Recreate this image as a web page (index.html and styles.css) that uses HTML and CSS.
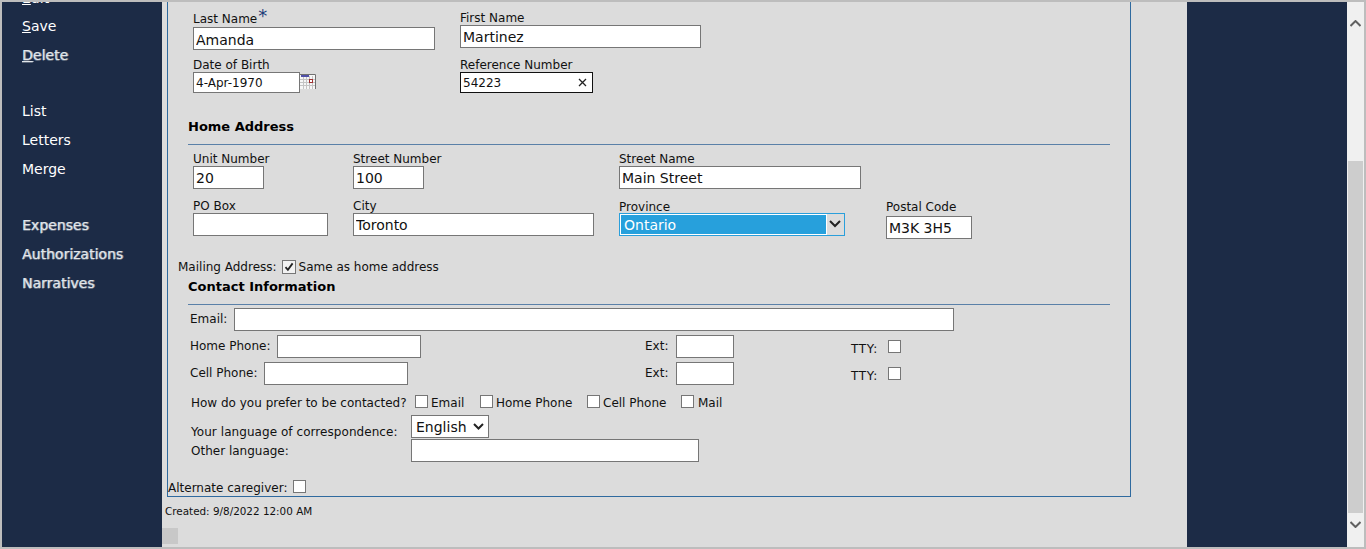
FILE: index.html
```html
<!DOCTYPE html>
<html lang="en">
<head>
<meta charset="utf-8">
<title>Client record</title>
<link rel="stylesheet" href="styles.css">
</head>
<body>
<div class="frame">
  <nav class="sidebar">
    <a class="nav-item nav-first"><u>E</u>dit</a>
    <a class="nav-item"><u>S</u>ave</a>
    <a class="nav-item soft"><u>D</u>elete</a>
    <div class="nav-gap"></div>
    <a class="nav-item">List</a>
    <a class="nav-item">Letters</a>
    <a class="nav-item">Merge</a>
    <div class="nav-gap"></div>
    <a class="nav-item soft">Expenses</a>
    <a class="nav-item soft">Authorizations</a>
    <a class="nav-item soft">Narratives</a>
  </nav>
  <main class="content">
    <form class="panel">
      <div class="row row-name">
        <div class="field w267 drop1">
          <label class="lbl lbl-req">Last Name<span class="req">*</span></label>
          <input class="inp big low w242" value="Amanda">
        </div>
        <div class="field">
          <label class="lbl">First Name</label>
          <input class="inp big w241" value="Martinez">
        </div>
      </div>
      <div class="row row-birth">
        <div class="field w267">
          <label class="lbl">Date of Birth</label>
          <div class="inline">
            <input class="inp small w107" value="4-Apr-1970">
            <svg class="cal" width="16" height="15" viewBox="0 0 16 15">
              <rect x="0" y="0" width="16" height="15" fill="#f6f6f6"/>
              <path d="M0 5.5h15M0 8.5h15M0 11.5h15M3.5 2v13M6.5 2v13M9.5 2v13M12.5 2v13" stroke="#c4c4c4" fill="none"/>
              <path d="M0 0.5h15.5V15" stroke="#707070" fill="none"/>
              <rect x="1" y="1" width="8" height="2" fill="#5050a8"/>
              <rect x="9.5" y="5.5" width="3" height="3" fill="#fff" stroke="#a03030"/>
            </svg>
          </div>
        </div>
        <div class="field">
          <label class="lbl">Reference Number</label>
          <div class="refbox">
            <input class="ref-input" value="54223">
            <svg class="ref-x" width="9" height="9" viewBox="0 0 9 9"><path d="M1 1l7 7M8 1l-7 7" stroke="#222" stroke-width="1.3" fill="none"/></svg>
          </div>
        </div>
      </div>
      <h3 class="head head-home">Home Address</h3>
      <hr class="rule rule-home">
      <div class="row row-unit">
        <div class="field w160"><label class="lbl">Unit Number</label><input class="inp big w71" value="20"></div>
        <div class="field w266"><label class="lbl">Street Number</label><input class="inp big w71" value="100"></div>
        <div class="field"><label class="lbl">Street Name</label><input class="inp big w242" value="Main Street"></div>
      </div>
      <div class="row row-city">
        <div class="field w160"><label class="lbl">PO Box</label><input class="inp big w135"></div>
        <div class="field w266"><label class="lbl">City</label><input class="inp big w241" value="Toronto"></div>
        <div class="field w267">
          <label class="lbl lbl-prov">Province</label>
          <div class="selectbox">
            <span class="select-value">Ontario</span>
            <svg class="chev" width="12" height="8" viewBox="0 0 12 8"><path d="M1 1l5 5 5-5" stroke="#222" stroke-width="2" fill="none"/></svg>
          </div>
        </div>
        <div class="field"><label class="lbl lbl-postal">Postal Code</label><input class="inp big w86" value="M3K 3H5"></div>
      </div>
      <div class="mailing">
        <span class="lbl-text">Mailing Address:</span>
        <span class="check checked"><svg width="10" height="10" viewBox="0 0 10 10"><path d="M1.5 5.2l2.4 2.6L8.6 1.4" stroke="#222" stroke-width="1.8" fill="none"/></svg></span>
        <span class="lbl-text">Same as home address</span>
      </div>
      <h3 class="head head-contact">Contact Information</h3>
      <hr class="rule rule-contact">
      <div class="line line-email">
        <span class="lbl-text">Email:</span>
        <input class="inp big w720 ml7">
      </div>
      <div class="line line-phone">
        <span class="lbl-text phone-home">Home Phone:</span>
        <input class="inp big w144">
        <span class="lbl-text ext-home">Ext:</span>
        <input class="inp big w58">
        <span class="lbl-text tty">TTY:</span>
        <span class="check tty-box"></span>
      </div>
      <div class="line line-phone line-cell">
        <span class="lbl-text phone-cell">Cell Phone:</span>
        <input class="inp big w144">
        <span class="lbl-text ext-cell">Ext:</span>
        <input class="inp big w58">
        <span class="lbl-text tty">TTY:</span>
        <span class="check tty-box"></span>
      </div>
      <div class="prefer">
        <span class="lbl-text prefer-q">How do you prefer to be contacted?</span>
        <span class="check"></span><span class="lbl-text opt1">Email</span>
        <span class="check"></span><span class="lbl-text opt2">Home Phone</span>
        <span class="check"></span><span class="lbl-text opt3">Cell Phone</span>
        <span class="check"></span><span class="lbl-text opt4">Mail</span>
      </div>
      <div class="lang">
        <span class="lbl-text lang-q">Your language of correspondence:</span>
        <div class="langbox">
          <span>English</span>
          <svg width="11" height="7" viewBox="0 0 11 7"><path d="M1 1l4.5 4.5L10 1" stroke="#222" stroke-width="2" fill="none"/></svg>
        </div>
      </div>
      <div class="other">
        <span class="lbl-text other-q">Other language:</span>
        <input class="inp big w288">
      </div>
      <div class="alternate">
        <span class="lbl-text alternate-q">Alternate caregiver:</span>
        <span class="check"></span>
      </div>
    </form>
    <p class="created">Created: 9/8/2022 12:00 AM</p>
    <div class="corner"></div>
  </main>
  <aside class="right-band"></aside>
  <div class="scrollbar">
    <svg class="arrow-up" width="11" height="7" viewBox="0 0 11 7"><path d="M0.5 6L5.5 1l5 5" stroke="#606060" stroke-width="2" fill="none"/></svg>
    <div class="thumb"></div>
    <svg class="arrow-down" width="11" height="7" viewBox="0 0 11 7"><path d="M0.5 1l5 5 5-5" stroke="#606060" stroke-width="2" fill="none"/></svg>
  </div>
</div>
</body>
</html>
```

FILE: styles.css
```css
* { box-sizing: border-box; }
html, body { margin: 0; padding: 0; height: 549px; overflow: hidden; }
body { font-family: "DejaVu Sans", Verdana, sans-serif; font-size: 12px; color: #111; }

.frame {
  width: 1366px; height: 549px;
  border: 2px solid #bdbdbd;
  display: flex;
  background: #dcdcdc;
  overflow: hidden;
}

.sidebar {
  width: 160px; flex: none;
  background: #1c2b46;
  padding: 0 0 0 20px;
  overflow: hidden;
  font-size: 14px;
  color: #fff;
}
.nav-item { display: block; height: 29px; line-height: 29px; color: #fff; }
.nav-first { margin-top: -18px; height: 28px; }
.nav-item.soft { color: #e2e6eb; text-shadow: 1px 0 0 #8d96a4, 0 1px 0 #5f6a7c; }
.nav-gap { height: 27px; }

.content { width: 1025px; flex: none; background: #dcdcdc; overflow: hidden; }

.panel {
  margin-left: 5px;
  width: 964px; height: 495px;
  border: 1px solid #2f6a9f;
  border-top: 0;
  padding-top: 8px;
}

.row { display: flex; align-items: flex-start; margin-left: 25px; }
.row-name { height: 47px; }
.row-birth { height: 61px; }
.row-unit { height: 47px; }
.row-city { height: 63px; }

.field { display: flex; flex-direction: column; align-items: flex-start; }
.drop1 { margin-top: 1px; }
.lbl { display: block; height: 15px; line-height: 17px; white-space: nowrap; }
.lbl-req { height: 16px; line-height: 13px; }
.lbl-prov { line-height: 19px; }
.lbl-postal { height: 18px; line-height: 19px; }
.req { font-size: 18px; line-height: 10px; color: #1c3c78; margin-left: 1px; vertical-align: 1px; }
.inline { display: flex; align-items: flex-start; }
.cal { margin-top: 2px; }

.w267 { width: 267px; }
.w266 { width: 266px; }
.w160 { width: 160px; }

.inp {
  display: block;
  height: 23px;
  border: 1px solid #767676;
  border-radius: 0;
  background: #fff;
  padding: 0 2px;
  margin: 0;
  font-family: inherit;
  color: #111;
  outline: none;
}
.inp.big { font-size: 14px; }
.inp.low { padding-top: 2px; }
.inp.small { font-size: 12px; height: 21px; }
.w242 { width: 242px; }
.w241 { width: 241px; }
.w107 { width: 107px; }
.w71 { width: 71px; }
.w135 { width: 135px; }
.w86 { width: 86px; }
.w720 { width: 720px; }
.w144 { width: 144px; }
.w58 { width: 58px; }
.w288 { width: 288px; }
.ml7 { margin-left: 7px; }

.refbox {
  width: 133px; height: 21px;
  border: 1px solid #111;
  background: #fff;
  display: flex; align-items: center;
  padding-right: 5px;
}
.ref-input {
  flex: 1; min-width: 0; border: 0; padding: 0 2px; height: 19px;
  font: 12px "DejaVu Sans", Verdana, sans-serif; color: #111; outline: none; background: transparent;
}

.head { margin: 0; font-size: 13px; font-weight: bold; height: 16px; line-height: 18px; margin-left: 20px; color: #000; }
.rule { border: 0; height: 1px; background: #5a80a8; margin: 0 0 0 20px; width: 922px; }
.rule-home { margin-top: 10px; margin-bottom: 6px; }

.selectbox {
  width: 226px; height: 23px;
  border: 1px solid #2a9fdb;
  background: #dcdcdc;
  display: flex; align-items: center;
}
.select-value {
  width: 207px; height: 21px;
  background: #27a0dc;
  border: 1px solid #fff;
  color: #fff;
  font-size: 14px; line-height: 20px;
  padding-left: 3px;
  margin-right: 2px;
}
.chev { flex: none; margin-top: -1px; }

.lbl-text { white-space: nowrap; line-height: 15px; }

.check {
  display: inline-flex; align-items: center; justify-content: center;
  width: 13px; height: 13px; flex: none;
  border: 1px solid #767676;
  border-radius: 0;
  background: #fff;
}
.check.checked { width: 14px; height: 14px; background: #f2f2f2; }

.mailing { display: flex; align-items: center; margin-left: 10px; height: 15px; margin-top: -1px; gap: 3px; }
.mailing .check { margin: -2px -1px 0 2px; }
.mailing .lbl-text:last-child { margin-left: 1px; }

.head-contact { margin-top: 3px; }
.rule-contact { margin-top: 10px; margin-bottom: 3px; }

.line { display: flex; align-items: center; height: 23px; }
.line-email { margin-left: 22px; margin-bottom: 4px; }
.line-phone { margin-bottom: 4px; }
.phone-home { margin-left: 22px; margin-right: 6px; width: 81px; }
.phone-cell { margin-left: 22px; margin-right: 6px; width: 68px; }
.ext-home { margin-left: 224px; width: 31px; }
.ext-cell { margin-left: 237px; width: 31px; }
.tty { margin-left: 117px; width: 37px; margin-top: 5px; letter-spacing: 0.7px; }
.tty-box { margin-top: -1px; }

.prefer { display: flex; align-items: center; margin-left: 23px; height: 14px; margin-top: 9px; }
.prefer-q { width: 224px; margin-top: 5px; }
.opt1 { margin-left: 3px; width: 49px; margin-top: 5px; }
.opt2 { margin-left: 3px; width: 91px; margin-top: 5px; }
.opt3 { margin-left: 3px; width: 78px; margin-top: 5px; }
.opt4 { margin-left: 4px; margin-top: 5px; }

.lang { display: flex; align-items: flex-start; margin-top: 7px; margin-left: 23px; height: 23px; }
.lang-q { width: 220px; margin-top: 10px; letter-spacing: 0.06px; }
.langbox {
  width: 78px; height: 23px; border: 1px solid #767676; background: #fff;
  font-size: 14px; display: flex; align-items: center; justify-content: space-between;
  padding: 0 4px 0 4px;
}

.other { display: flex; align-items: flex-start; margin-left: 23px; margin-top: 1px; height: 23px; }
.other-q { width: 220px; margin-top: 5px; }

.alternate { display: flex; align-items: center; margin-top: 17px; height: 14px; gap: 6px; }
.alternate-q { margin-top: 4px; }

.created { margin: 8px 0 0 3px; font-size: 10.4px; line-height: 12px; color: #111; }
.corner { width: 16px; height: 16px; background: #c8c8c8; margin-top: 11px; }

.right-band { width: 160px; flex: none; background: #1c2b46; }

.scrollbar {
  width: 17px; flex: none; background: #f0f0f0;
  display: flex; flex-direction: column; align-items: center;
  padding-top: 18px;
}
.arrow-up { flex: none; }
.thumb { width: 15px; height: 352px; background: #cdcdcd; margin-top: 134px; }
.arrow-down { flex: none; margin-top: 8px; }
```
